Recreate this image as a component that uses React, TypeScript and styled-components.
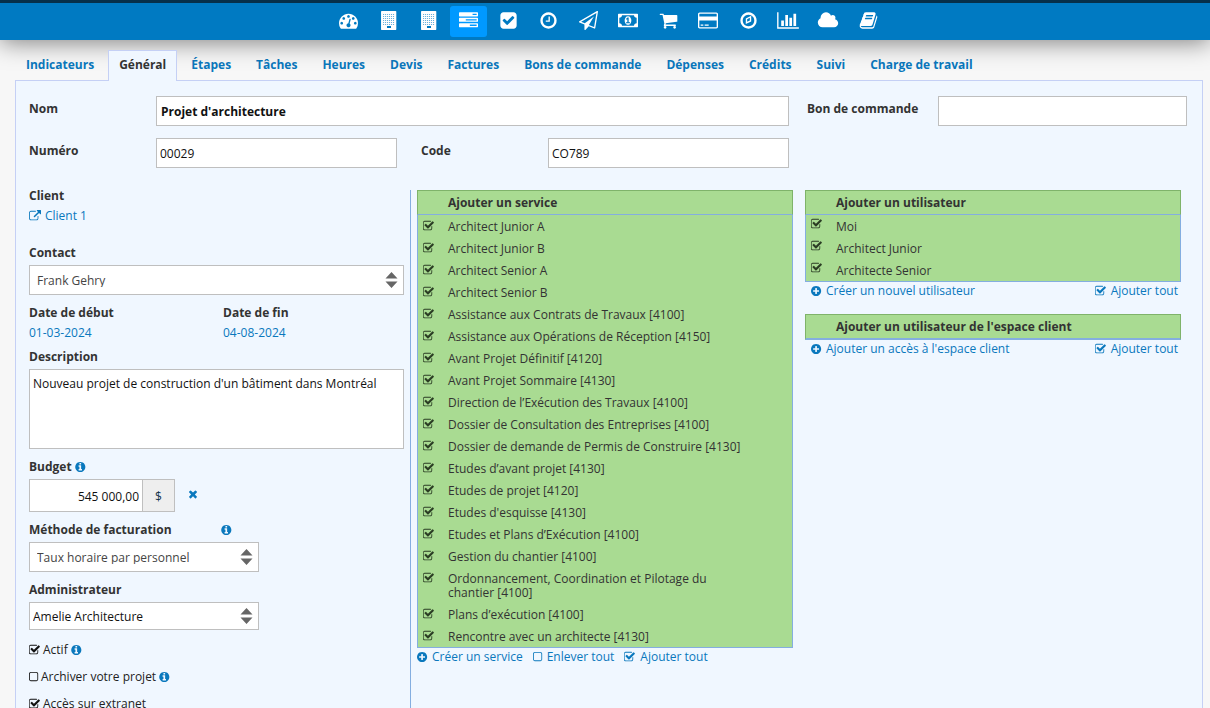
import React, { useId, useState } from "react";
import styled, { createGlobalStyle, css } from "styled-components";

const color = {
  link: "#0a78bd",
  text: "#333333",
  field: "#bfbfbf",
  panel: "#f0f7ff",
  panelBorder: "#c5d0f5",
  green: "#a9db92",
  greenBorder: "#7fb36a",
  blueLine: "#84aee0",
};

const GlobalStyle = createGlobalStyle`
  *, *::before, *::after { box-sizing: border-box; }
  body {
    margin: 0;
    background: #f7f7f7;
    color: ${color.text};
    font: 12px/12px "Open Sans", "Noto Sans", sans-serif;
  }
  input, select, textarea, button { font: inherit; color: inherit; margin: 0; }
  a { color: ${color.link}; text-decoration: none; }
  ul { list-style: none; margin: 0; padding: 0; }
`;

/* ---------- icons ---------- */

const circle =
  "M1664 896q0 209-103 385.5t-279.5 279.5-385.5 103-385.5-103-279.5-279.5-103-385.5 103-385.5 279.5-279.5 385.5-103 385.5 103 279.5 279.5 103 385.5z";

const grid = (xs: number[], ys: number[], size: number) =>
  ys.flatMap((y) => xs.map((x) => `M${x} ${y}v${size}h${size}v-${size}z`)).join("");

const bar =
  "v256q0 26-19 45t-45 19h-1664q-26 0-45-19t-19-45v-256q0-26 19-45t45-19h1664q26 0 45 19t19 45z";

const shapes = {
  dashboard: {
    x: 0,
    w: 1792,
    d: "M384 1152q0-53-37.5-90.5t-90.5-37.5-90.5 37.5-37.5 90.5 37.5 90.5 90.5 37.5 90.5-37.5 37.5-90.5zm192-448q0-53-37.5-90.5t-90.5-37.5-90.5 37.5-37.5 90.5 37.5 90.5 90.5 37.5 90.5-37.5 37.5-90.5zm428 481l101-382q6-26-7.5-48.5t-38.5-29.5-48 6.5-30 39.5l-101 382q-60 5-107 43.5t-63 98.5q-20 77 20 146t117 89 146-20 89-117q16-60-6-117t-72-91zm660-33q0-53-37.5-90.5t-90.5-37.5-90.5 37.5-37.5 90.5 37.5 90.5 90.5 37.5 90.5-37.5 37.5-90.5zm-640-640q0-53-37.5-90.5t-90.5-37.5-90.5 37.5-37.5 90.5 37.5 90.5 90.5 37.5 90.5-37.5 37.5-90.5zm448 192q0-53-37.5-90.5t-90.5-37.5-90.5 37.5-37.5 90.5 37.5 90.5 90.5 37.5 90.5-37.5 37.5-90.5zm320 448q0 261-141 483-19 29-54 29h-1402q-35 0-54-29-141-221-141-483 0-182 71-348t191-286 286-191 348-71 348 71 286 191 191 286 71 348z",
  },
  building: {
    x: 0,
    w: 1792,
    d:
      "M1568 0q26 0 45 19t19 45v1664q0 26-19 45t-45 19h-1312q-26 0-45-19t-19-45v-1664q0-26 19-45t45-19z" +
      grid([400, 588, 776, 964, 1152, 1340], [283, 471, 659, 847, 1035, 1223], 80) +
      "M755 1415v188h377v-188z",
  },
  tasks: {
    x: 0,
    w: 1792,
    d: `M1024 1408h640v-128h-640zM640 896h1024v-128h-1024zM1280 384h384v-128h-384zM1792 1216${bar}M1792 704${bar}M1792 192${bar}`,
  },
  checkSquare: {
    x: 0,
    w: 1792,
    d: "M813 1299l614-614q19-19 19-45t-19-45l-102-102q-19-19-45-19t-45 19l-467 467-211-211q-19-19-45-19t-45 19l-102 102q-19 19-19 45t19 45l358 358q19 19 45 19t45-19zm851-883v960q0 119-84.5 203.5t-203.5 84.5h-960q-119 0-203.5-84.5t-84.5-203.5v-960q0-119 84.5-203.5t203.5-84.5h960q119 0 203.5 84.5t84.5 203.5z",
  },
  clock: {
    x: 0,
    w: 1792,
    d:
      "M1024 544v448q0 14-9 23t-23 9h-320q-14 0-23-9t-9-23v-64q0-14 9-23t23-9h224v-352q0-14 9-23t23-9h64q14 0 23 9t9 23zm416 352q0-148-73-273t-198-198-273-73-273 73-198 198-73 273 73 273 198 198 273 73 273-73 198-198 73-273z" +
      circle,
  },
  plane: {
    x: 0,
    w: 1792,
    d: "M1764 11q33 24 27 64l-256 1536q-5 29-32 45-14 8-31 8-11 0-24-5l-527-215-298 327q-18 21-47 21-14 0-23-4-19-7-30-23.5t-11-36.5v-452l-472-193q-37-14-40-55-3-39 32-59l1664-960q35-21 68 2zm-342 1499l221-1323-1434 827 336 137 863-639-478 797z",
  },
  money: {
    x: 0,
    w: 1920,
    d: "M768 1152h384v-96h-128v-448h-114l-148 137 77 80q42-37 55-57h2v288h-128v96zm512-256q0 70-21 142t-59.5 134-101.5 101-138 39-138-39-101.5-101-59.5-134-21-142 21-142 59.5-134 101.5-101 138-39 138 39 101.5 101 59.5 134 21 142zm512 256v-512q-106 0-181-75t-75-181h-1152q0 106-75 181t-181 75v512q106 0 181 75t75 181h1152q0-106 75-181t181-75zm128-832v1152q0 26-19 45t-45 19h-1792q-26 0-45-19t-19-45v-1152q0-26 19-45t45-19h1792q26 0 45 19t19 45z",
  },
  cart: {
    x: 0,
    w: 1792,
    d: "M704 1536q0 52-38 90t-90 38-90-38-38-90 38-90 90-38 90 38 38 90zm896 0q0 52-38 90t-90 38-90-38-38-90 38-90 90-38 90 38 38 90zm128-1088v512q0 24-16.5 42.5t-40.5 21.5l-1044 122q13 60 13 70 0 16-24 64h920q26 0 45 19t19 45-19 45-45 19h-1024q-26 0-45-19t-19-45q0-11 8-31.5t16-36 21.5-40 15.5-29.5l-177-823h-204q-26 0-45-19t-19-45 19-45 45-19h256q16 0 28.5 6.5t19.5 15.5 13 24.5 8 26 5.5 29.5 4.5 26h1201q26 0 45 19t19 45z",
  },
  card: {
    x: 0,
    w: 1920,
    d: "M1760 128q66 0 113 47t47 113v1216q0 66-47 113t-113 47h-1600q-66 0-113-47t-47-113v-1216q0-66 47-113t113-47h1600zm-1600 128q-13 0-22.5 9.5t-9.5 22.5v224h1664v-224q0-13-9.5-22.5t-22.5-9.5h-1600zm1600 1280q13 0 22.5-9.5t9.5-22.5v-608h-1664v608q0 13 9.5 22.5t22.5 9.5h1600zm-1504-128v-128h256v128h-256zm384 0v-128h384v128h-384z",
  },
  compass: {
    x: 0,
    w: 1792,
    d:
      "M768 1024l256-128v-256l-256 128zM1152 448v532l-512 256v-532zM1440 896q0-148-73-273t-198-198-273-73-273 73-198 198-73 273 73 273 198 198 273 73 273-73 198-198 73-273z" +
      circle,
  },
  chart: {
    x: 0,
    w: 2048,
    d: "M640 896v512h-256v-512h256zm384-512v1024h-256v-1024h256zm1024 1152v128h-2048v-1536h128v1408h1920zm-640-896v768h-256v-768h256zm384-384v1152h-256v-1152h256z",
  },
  cloud: {
    x: 0,
    w: 2048,
    d: "M1984 1152q0 159-112.5 271.5t-271.5 112.5h-1088q-185 0-316.5-131.5t-131.5-316.5q0-132 71-241.5t187-163.5q-2-28-2-43 0-212 150-362t362-150q158 0 286.5 88t187.5 230q70-62 166-62 106 0 181 75t75 181q0 75-41 138 129 30 213 134.5t84 239.5z",
  },
  book: {
    x: 0,
    w: 1792,
    d: "M1703 478q40 57 18 129l-275 906q-19 64-76.5 107.5t-122.5 43.5h-923q-77 0-148.5-53.5t-99.5-131.5q-24-67-2-127 0-4 3-27t4-37q1-8-3-21.5t-3-19.5q2-11 8-21t16.5-23.5 16.5-23.5q23-38 45-91.5t30-91.5q3-10 .5-30t-.5-28q3-11 17-28t17-23q21-36 42-92t25-90q1-9-2.5-32t.5-28q4-13 22-30.5t22-22.5q19-26 42.5-84.5t27.5-96.5q1-8-3-25.5t-2-26.5q2-8 9-18t18-23 17-21q8-12 16.5-30.5t15-35 16-36 19.5-32 26.5-23.5 36-11.5 47.5 5.5l-1 3q38-9 51-9h761q74 0 114 56t18 130l-274 906q-36 119-71.5 153.5t-128.5 34.5h-869q-27 0-38 15-11 16-1 43 24 70 144 70h923q29 0 56-15.5t35-41.5l300-987q7-22 5-57 38 15 59 43zm-1064 2q-4 13 2 22.5t20 9.5h608q13 0 25.5-9.5t16.5-22.5l21-64q4-13-2-22.5t-20-9.5h-608q-13 0-25.5 9.5t-16.5 22.5zm-83 256q-4 13 2 22.5t20 9.5h608q13 0 25.5-9.5t16.5-22.5l21-64q4-13-2-22.5t-20-9.5h-608q-13 0-25.5 9.5t-16.5 22.5z",
  },
  checked: {
    x: 96,
    w: 1792,
    d: "M1472 930v318q0 119-84.5 203.5t-203.5 84.5h-832q-119 0-203.5-84.5t-84.5-203.5v-832q0-119 84.5-203.5t203.5-84.5h832q63 0 117 25 15 7 18 23 3 17-9 29l-49 49q-10 10-23 10-3 0-9-2-23-6-45-6h-832q-66 0-113 47t-47 113v832q0 66 47 113t113 47h832q66 0 113-47t47-113v-254q0-13 9-22l64-64q10-10 23-10 6 0 12 3 20 8 20 29zm231-489l-814 814q-24 24-57 24t-57-24l-430-430q-24-24-24-57t24-57l110-110q24-24 57-24t57 24l263 263 647-647q24-24 57-24t57 24l110 110q24 24 24 57t-24 57z",
  },
  unchecked: {
    x: 64,
    w: 1536,
    d: "M1184 256h-832q-66 0-113 47t-47 113v832q0 66 47 113t113 47h832q66 0 113-47t47-113v-832q0-66-47-113t-113-47zm288 160v832q0 119-84.5 203.5t-203.5 84.5h-832q-119 0-203.5-84.5t-84.5-203.5v-832q0-119 84.5-203.5t203.5-84.5h832q119 0 203.5 84.5t84.5 203.5z",
  },
  plus: {
    x: 128,
    w: 1664,
    d:
      "M1344 960v-128q0-26-19-45t-45-19h-256v-256q0-26-19-45t-45-19h-128q-26 0-45 19t-19 45v256h-256q-26 0-45 19t-19 45v128q0 26 19 45t45 19h256v256q0 26 19 45t45 19h128q26 0 45-19t19-45v-256h256q26 0 45-19t19-45z" +
      circle,
  },
  info: {
    x: 96,
    w: 1664,
    d:
      "M1152 1376v-160q0-14-9-23t-23-9h-96v-512q0-14-9-23t-23-9h-320q-14 0-23 9t-9 23v160q0 14 9 23t23 9h96v320h-96q-14 0-23 9t-9 23v160q0 14 9 23t23 9h448q14 0 23-9t9-23zm-128-896v-160q0-14-9-23t-23-9h-192q-14 0-23 9t-9 23v160q0 14 9 23t23 9h192q14 0 23-9t9-23z" +
      circle,
  },
  times: {
    x: 0,
    w: 1792,
    d: "M1490 1322q0 40-28 68l-136 136q-28 28-68 28t-68-28l-294-294-294 294q-28 28-68 28t-68-28l-136-136q-28-28-28-68t28-68l294-294-294-294q-28-28-28-68t28-68l136-136q28-28 68-28t68 28l294 294 294-294q28-28 68-28t68 28l136 136q28 28 28 68t-28 68l-294 294 294 294q28 28 28 68z",
  },
  external: {
    x: 0,
    w: 1792,
    d: "M1408 928v320q0 119-84.5 203.5t-203.5 84.5h-832q-119 0-203.5-84.5t-84.5-203.5v-832q0-119 84.5-203.5t203.5-84.5h704q14 0 23 9t9 23v64q0 14-9 23t-23 9h-704q-66 0-113 47t-47 113v832q0 66 47 113t113 47h832q66 0 113-47t47-113v-320q0-14 9-23t23-9h64q14 0 23 9t9 23zm384-864v512q0 26-19 45t-45 19-45-19l-176-176-652 652q-10 10-23 10t-23-10l-114-114q-10-10-10-23t10-23l652-652-176-176q-19-19-19-45t19-45 45-19h512q26 0 45 19t19 45z",
  },
};

type IconName = keyof typeof shapes;

const Svg = styled.svg`
  display: block;
  flex: none;
  fill: currentColor;
`;

const Icon = ({ name, size = 12 }: { name: IconName; size?: number }) => {
  const { x, w, d } = shapes[name];
  return (
    <Svg
      viewBox={`${x} 0 ${w} 1792`}
      width={Math.round((size * w) / 1792)}
      height={size}
      fillRule="evenodd"
      aria-hidden="true"
    >
      <path d={d} />
    </Svg>
  );
};

/* ---------- shell ---------- */

const Shell = styled.div`
  display: flex;
  flex-direction: column;
  height: 100vh;
`;

const TopBar = styled.header`
  position: relative;
  z-index: 1;
  flex: none;
  border-top: 3px solid #06304a;
  background: #007ac2;
  box-shadow: 0 2px 24px rgba(0, 0, 0, 0.5);
`;

const IconNav = styled.nav`
  display: flex;
  justify-content: center;
  gap: 3px;
  padding: 3px 0 3px 7px;
`;

const NavLink = styled.a<{ $active?: boolean }>`
  display: flex;
  align-items: center;
  justify-content: center;
  width: 37px;
  height: 31px;
  padding: 0 1px 2px 0;
  border-radius: 3px;
  color: #ffffff;
  background: ${(p) => (p.$active ? "#0099ff" : "transparent")};
`;

const Main = styled.main`
  flex: 1;
  display: flex;
  flex-direction: column;
  min-height: 0;
  padding: 10px 7px 0 15px;
  overflow-y: auto;
  scrollbar-width: none;
`;

const Tabs = styled.nav`
  display: flex;
  flex: none;
  gap: 3px;
  margin-bottom: -1px;
`;

const Tab = styled.a<{ $active?: boolean }>`
  height: 31px;
  padding: 8px 10px 0;
  border: 1px solid transparent;
  border-bottom: 0;
  font-weight: 700;
  white-space: nowrap;
  ${(p) =>
    p.$active &&
    css`
      color: ${color.text};
      background: ${color.panel};
      border-color: ${color.panelBorder};
      z-index: 1;
    `}
`;

const Panel = styled.section`
  flex: 1 0 auto;
  padding: 15px 15px 0 13px;
  border: 1px solid ${color.panelBorder};
  border-bottom: 0;
  background: ${color.panel};
`;

/* ---------- form parts ---------- */

const TopFields = styled.div`
  display: grid;
  grid-template-columns: 2fr 1fr;
  gap: 12px 18px;
`;

const Halves = styled.div`
  display: grid;
  grid-template-columns: 1fr 1fr;
  gap: 24px;
`;

const InlineField = styled.div<{ $wide?: boolean }>`
  display: grid;
  grid-template-columns: ${(p) => (p.$wide ? 131 : 127)}px 1fr;
`;

const Label = styled.label`
  font-weight: 700;
`;

const InlineLabel = styled(Label)`
  padding-top: 7px;
`;

const fieldBox = css`
  width: 100%;
  border: 1px solid ${color.field};
  border-radius: 0;
  background: #ffffff;
`;

const TextInput = styled.input<{ $bold?: boolean }>`
  ${fieldBox}
  height: 30px;
  padding: 0 ${(p) => (p.$bold ? 4 : 3)}px;
  color: #111111;
  font-weight: ${(p) => (p.$bold ? 700 : 400)};
`;

const TextArea = styled.textarea`
  ${fieldBox}
  display: block;
  height: 80px;
  padding: 6px 3px;
  line-height: 16px;
  color: #111111;
  resize: none;
`;

const SelectBox = styled.div<{ $narrow?: boolean }>`
  display: grid;
  align-items: center;
  width: ${(p) => (p.$narrow ? "230px" : "100%")};
  & > * { grid-area: 1 / 1; }
  & > svg { justify-self: end; margin-right: 6px; pointer-events: none; }
`;

const NativeSelect = styled.select<{ $plain?: boolean }>`
  ${fieldBox}
  appearance: none;
  height: ${(p) => (p.$plain ? 28 : 30)}px;
  padding: 2px 24px 0 ${(p) => (p.$plain ? 3 : 7)}px;
  color: ${(p) => (p.$plain ? "#111111" : "#444444")};
`;

const Select = ({ id, value, narrow, plain }: { id: string; value: string; narrow?: boolean; plain?: boolean }) => (
  <SelectBox $narrow={narrow}>
    <NativeSelect id={id} $plain={plain}>
      <option>{value}</option>
    </NativeSelect>
    <svg width="13" height="16" viewBox="0 0 13 16" fill="#666666" aria-hidden="true">
      <path d="M6.500 0L12.500 6.500H.5zM.5 9.500H12.500L6.500 16z" />
    </svg>
  </SelectBox>
);

const Columns = styled.div`
  display: grid;
  grid-template-columns: repeat(3, 1fr);
  min-height: calc(100% - 90px);
  margin: 22px 0 0 -6px;
`;

const Details = styled.div`
  display: flex;
  flex-direction: column;
  gap: 12px;
  padding: 0 6px 12px;
  border-right: 1px solid ${color.blueLine};
`;

const Field = styled.div<{ $gap?: number }>`
  display: flex;
  flex-direction: column;
  gap: ${(p) => p.$gap ?? 6}px;
`;

const ClientField = styled(Field)`
  padding-bottom: 13px;
`;

const Dates = styled.div`
  display: grid;
  grid-template-columns: 194px 1fr;
`;

const IconLink = styled.a`
  display: inline-flex;
  align-items: center;
  gap: 4px;
  white-space: nowrap;
`;

const LabelLine = styled.div<{ $spread?: boolean }>`
  display: flex;
  align-items: center;
  justify-content: ${(p) => (p.$spread ? "space-between" : "flex-start")};
  gap: 3px;
  width: ${(p) => (p.$spread ? "203px" : "auto")};
`;

const IconButton = styled.button`
  display: flex;
  padding: 0;
  border: 0;
  background: none;
  color: ${color.link};
  cursor: pointer;
`;

const ClearButton = styled(IconButton)`
  padding-bottom: 4px;
`;

const BudgetRow = styled.div`
  display: flex;
  align-items: center;
`;

const BudgetInput = styled(TextInput)`
  width: 114px;
  height: 33px;
  text-align: right;
  padding: 2px 3px 0;
`;

const Currency = styled.span`
  display: flex;
  align-items: center;
  justify-content: center;
  width: 32px;
  height: 33px;
  margin-right: 12px;
  padding-top: 2px;
  border: 1px solid ${color.field};
  border-left: 0;
  background: #eeeeee;
  color: #12324a;
`;

const Toggles = styled.div`
  display: flex;
  flex-direction: column;
  gap: 15px;
  padding-top: 2px;
`;

const ToggleLine = styled.div`
  display: flex;
  align-items: center;
  gap: 3px;
`;

const CheckLabel = styled.label`
  display: flex;
  align-items: center;
  gap: 2px;
  color: #222222;
  cursor: pointer;
`;

const CheckHolder = styled.span`
  position: relative;
  display: flex;
  flex: none;
  color: #111111;
`;

const HiddenCheck = styled.input`
  position: absolute;
  inset: 0;
  width: 100%;
  height: 100%;
  opacity: 0;
  cursor: pointer;
`;

const Check = ({ initial = true }: { initial?: boolean }) => {
  const [on, setOn] = useState(initial);
  return (
    <CheckHolder>
      <HiddenCheck type="checkbox" checked={on} onChange={() => setOn(!on)} />
      <Icon name={on ? "checked" : "unchecked"} />
    </CheckHolder>
  );
};

/* ---------- green lists ---------- */

const ListColumn = styled.div`
  padding: 0 6px;
`;

const ListTitle = styled.h2`
  margin: 0;
  padding: 6px 30px 5px;
  border: 1px solid ${color.greenBorder};
  border-bottom-color: ${color.blueLine};
  background: ${color.green};
  font-size: 12px;
  line-height: 12px;
  font-weight: 700;
`;

const ClientSpace = styled.div`
  margin-top: 14px;
  & > ${ListTitle} { border-bottom-width: 2px; }
`;

const List = styled.ul`
  border: 1px solid ${color.blueLine};
  border-top: 0;
  background: ${color.green};
`;

const RowText = styled.span`
  padding-top: 2px;
`;

const Row = styled.label<{ $raised?: boolean }>`
  display: flex;
  align-items: flex-start;
  gap: 13px;
  padding: 3px 40px 3px 5px;
  line-height: 14px;
  cursor: pointer;
  ${CheckHolder} {
    color: #2b3d24;
    padding-top: ${(p) => (p.$raised ? 0 : 2)}px;
  }
`;

const ListActions = styled.div<{ $spread?: boolean }>`
  display: flex;
  justify-content: ${(p) => (p.$spread ? "space-between" : "flex-start")};
  gap: 10px;
  padding: ${(p) => (p.$spread ? "0 3px 0 6px" : "0")};
  line-height: 18px;
`;

const CheckList = ({ items, raised }: { items: string[]; raised?: boolean }) => (
  <List>
    {items.map((item) => (
      <li key={item}>
        <Row $raised={raised}>
          <Check />
          <RowText>{item}</RowText>
        </Row>
      </li>
    ))}
  </List>
);

/* ---------- data ---------- */

const navItems: { icon: IconName; label: string; active?: boolean }[] = [
  { icon: "dashboard", label: "Tableau de bord" },
  { icon: "building", label: "Entreprise" },
  { icon: "building", label: "Clients" },
  { icon: "tasks", label: "Projets", active: true },
  { icon: "checkSquare", label: "Tâches" },
  { icon: "clock", label: "Heures" },
  { icon: "plane", label: "Devis" },
  { icon: "money", label: "Factures" },
  { icon: "cart", label: "Achats" },
  { icon: "card", label: "Dépenses" },
  { icon: "compass", label: "Suivi" },
  { icon: "chart", label: "Rapports" },
  { icon: "cloud", label: "Documents" },
  { icon: "book", label: "Répertoire" },
];

const tabs = [
  "Indicateurs", "Général", "Étapes", "Tâches", "Heures", "Devis", "Factures",
  "Bons de commande", "Dépenses", "Crédits", "Suivi", "Charge de travail",
];

const services = [
  "Architect Junior A",
  "Architect Junior B",
  "Architect Senior A",
  "Architect Senior B",
  "Assistance aux Contrats de Travaux [4100]",
  "Assistance aux Opérations de Réception [4150]",
  "Avant Projet Définitif [4120]",
  "Avant Projet Sommaire [4130]",
  "Direction de l’Exécution des Travaux [4100]",
  "Dossier de Consultation des Entreprises [4100]",
  "Dossier de demande de Permis de Construire [4130]",
  "Etudes d’avant projet [4130]",
  "Etudes de projet [4120]",
  "Etudes d'esquisse [4130]",
  "Etudes et Plans d’Exécution [4100]",
  "Gestion du chantier [4100]",
  "Ordonnancement, Coordination et Pilotage du chantier [4100]",
  "Plans d’exécution [4100]",
  "Rencontre avec un architecte [4130]",
];

const users = ["Moi", "Architect Junior", "Architecte Senior"];

const Info = () => (
  <IconButton type="button" aria-label="Information">
    <Icon name="info" />
  </IconButton>
);

const Toggle = ({ text, on, info }: { text: string; on: boolean; info?: boolean }) => (
  <ToggleLine>
    <CheckLabel>
      <Check initial={on} />
      {text}
    </CheckLabel>
    {info && <Info />}
  </ToggleLine>
);

export default function App() {
  const id = useId();
  return (
    <Shell>
      <GlobalStyle />
      <TopBar>
        <IconNav>
          {navItems.map((n) => (
            <NavLink key={n.label} href="#" aria-label={n.label} $active={n.active}>
              <Icon name={n.icon} size={19} />
            </NavLink>
          ))}
        </IconNav>
      </TopBar>
      <Main>
        <Tabs>
          {tabs.map((t) => (
            <Tab key={t} href="#" $active={t === "Général"}>
              {t}
            </Tab>
          ))}
        </Tabs>
        <Panel>
          <TopFields>
            <InlineField>
              <InlineLabel htmlFor={`${id}nom`}>Nom</InlineLabel>
              <TextInput id={`${id}nom`} defaultValue="Projet d'architecture" $bold />
            </InlineField>
            <InlineField $wide>
              <InlineLabel htmlFor={`${id}bon`}>Bon de commande</InlineLabel>
              <TextInput id={`${id}bon`} />
            </InlineField>
            <Halves>
              <InlineField>
                <InlineLabel htmlFor={`${id}num`}>Numéro</InlineLabel>
                <TextInput id={`${id}num`} defaultValue="00029" />
              </InlineField>
              <InlineField>
                <InlineLabel htmlFor={`${id}code`}>Code</InlineLabel>
                <TextInput id={`${id}code`} defaultValue="CO789" />
              </InlineField>
            </Halves>
          </TopFields>

          <Columns>
            <Details>
              <ClientField $gap={8}>
                <Label as="span">Client</Label>
                <IconLink href="#">
                  <Icon name="external" />
                  Client 1
                </IconLink>
              </ClientField>
              <Field>
                <Label htmlFor={`${id}contact`}>Contact</Label>
                <Select id={`${id}contact`} value="Frank Gehry" />
              </Field>
              <Dates>
                <Field $gap={8}>
                  <Label as="span">Date de début</Label>
                  <a href="#">01-03-2024</a>
                </Field>
                <Field $gap={8}>
                  <Label as="span">Date de fin</Label>
                  <a href="#">04-08-2024</a>
                </Field>
              </Dates>
              <Field>
                <Label htmlFor={`${id}desc`}>Description</Label>
                <TextArea
                  id={`${id}desc`}
                  defaultValue="Nouveau projet de construction d'un bâtiment dans Montréal"
                />
              </Field>
              <Field>
                <LabelLine>
                  <Label htmlFor={`${id}budget`}>Budget</Label>
                  <Info />
                </LabelLine>
                <BudgetRow>
                  <BudgetInput id={`${id}budget`} defaultValue="545 000,00" />
                  <Currency>$</Currency>
                  <ClearButton type="button" aria-label="Effacer">
                    <Icon name="times" />
                  </ClearButton>
                </BudgetRow>
              </Field>
              <Field>
                <LabelLine $spread>
                  <Label htmlFor={`${id}methode`}>Méthode de facturation</Label>
                  <Info />
                </LabelLine>
                <Select id={`${id}methode`} value="Taux horaire par personnel" narrow />
              </Field>
              <Field>
                <Label htmlFor={`${id}admin`}>Administrateur</Label>
                <Select id={`${id}admin`} value="Amelie Architecture" narrow plain />
              </Field>
              <Toggles>
                <Toggle text="Actif" on info />
                <Toggle text="Archiver votre projet" on={false} info />
                <Toggle text="Accès sur extranet" on />
              </Toggles>
            </Details>

            <ListColumn>
              <ListTitle>Ajouter un service</ListTitle>
              <CheckList items={services} />
              <ListActions>
                <IconLink href="#">
                  <Icon name="plus" />
                  Créer un service
                </IconLink>
                <IconLink href="#">
                  <Icon name="unchecked" />
                  Enlever tout
                </IconLink>
                <IconLink href="#">
                  <Icon name="checked" />
                  Ajouter tout
                </IconLink>
              </ListActions>
            </ListColumn>

            <ListColumn>
              <ListTitle>Ajouter un utilisateur</ListTitle>
              <CheckList items={users} raised />
              <ListActions $spread>
                <IconLink href="#">
                  <Icon name="plus" />
                  Créer un nouvel utilisateur
                </IconLink>
                <IconLink href="#">
                  <Icon name="checked" />
                  Ajouter tout
                </IconLink>
              </ListActions>
              <ClientSpace>
                <ListTitle>Ajouter un utilisateur de l'espace client</ListTitle>
                <ListActions $spread>
                  <IconLink href="#">
                    <Icon name="plus" />
                    Ajouter un accès à l'espace client
                  </IconLink>
                  <IconLink href="#">
                    <Icon name="checked" />
                    Ajouter tout
                  </IconLink>
                </ListActions>
              </ClientSpace>
            </ListColumn>
          </Columns>
        </Panel>
      </Main>
    </Shell>
  );
}
